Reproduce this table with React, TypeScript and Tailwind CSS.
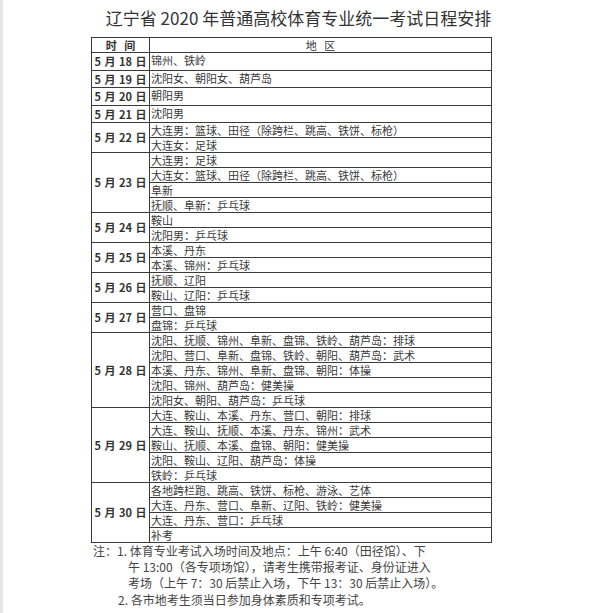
const font = { fontFamily: '"Noto Sans CJK SC", "Noto Sans", sans-serif' };

type Group = { date: string; items: string[] };

const groups: Group[] = [
  { date: '5 月 18 日', items: ['锦州、铁岭'] },
  { date: '5 月 19 日', items: ['沈阳女、朝阳女、葫芦岛'] },
  { date: '5 月 20 日', items: ['朝阳男'] },
  { date: '5 月 21 日', items: ['沈阳男'] },
  { date: '5 月 22 日', items: ['大连男：篮球、田径（除跨栏、跳高、铁饼、标枪）', '大连女：足球'] },
  {
    date: '5 月 23 日',
    items: ['大连男：足球', '大连女：篮球、田径（除跨栏、跳高、铁饼、标枪）', '阜新', '抚顺、阜新：乒乓球'],
  },
  { date: '5 月 24 日', items: ['鞍山', '沈阳男：乒乓球'] },
  { date: '5 月 25 日', items: ['本溪、丹东', '本溪、锦州：乒乓球'] },
  { date: '5 月 26 日', items: ['抚顺、辽阳', '鞍山、辽阳：乒乓球'] },
  { date: '5 月 27 日', items: ['营口、盘锦', '盘锦：乒乓球'] },
  {
    date: '5 月 28 日',
    items: [
      '沈阳、抚顺、锦州、阜新、盘锦、铁岭、葫芦岛：排球',
      '沈阳、营口、阜新、盘锦、铁岭、朝阳、葫芦岛：武术',
      '本溪、丹东、锦州、阜新、盘锦、朝阳：体操',
      '沈阳、锦州、葫芦岛：健美操',
      '沈阳女、朝阳、葫芦岛：乒乓球',
    ],
  },
  {
    date: '5 月 29 日',
    items: [
      '大连、鞍山、本溪、丹东、营口、朝阳：排球',
      '大连、鞍山、抚顺、本溪、丹东、锦州：武术',
      '鞍山、抚顺、本溪、盘锦、朝阳：健美操',
      '沈阳、鞍山、辽阳、葫芦岛：体操',
      '铁岭：乒乓球',
    ],
  },
  {
    date: '5 月 30 日',
    items: ['各地跨栏跑、跳高、铁饼、标枪、游泳、艺体', '大连、丹东、营口、阜新、辽阳、铁岭：健美操', '大连、丹东、营口：乒乓球', '补考'],
  },
];

function DateGroup({ group }: { group: Group }) {
  return (
    <div className="flex border-b border-[#3a3a3a]">
      <div className="w-[58px] shrink-0 flex items-center justify-center border-r border-[#3a3a3a] text-[11px] font-semibold text-[#333] whitespace-pre [word-spacing:1px]">
        {group.date}
      </div>
      <div className="flex-1 flex flex-col">
        {group.items.map((item, i) => (
          <div
            key={i}
            className={
              i < group.items.length - 1
                ? 'h-[15px] border-b border-[#3a3a3a] pl-[1px] text-[11px] leading-[14px] text-[#3a3a3a] whitespace-nowrap'
                : 'h-[14px] pl-[1px] text-[11px] leading-[14px] text-[#3a3a3a] whitespace-nowrap'
            }
          >
            {item}
          </div>
        ))}
      </div>
    </div>
  );
}

export default function App() {
  return (
    <div className="w-[596px] h-[613px] bg-white border-l-[3px] border-[#e6e6e6] overflow-hidden" style={font}>
      <div className="pt-[7px] h-[37px] text-center text-[17px] leading-[22px] text-[#333] pr-[2px]">
        辽宁省 2020 年普通高校体育专业统一考试日程安排
      </div>
      <div className="ml-[88px] w-[401px] border-t border-l border-r border-[#3a3a3a]">
        <div className="flex h-[15px] border-b border-[#3a3a3a] text-[11px] leading-[14px] text-[#333]">
          <div className="w-[58px] shrink-0 border-r border-[#3a3a3a] text-center font-semibold whitespace-pre">时   间</div>
          <div className="flex-1 text-center whitespace-pre">地   区</div>
        </div>
        {groups.map((g) => (
          <DateGroup key={g.date} group={g} />
        ))}
      </div>
      <div className="text-[12px] leading-[16px] text-[#444]">
        <div className="flex ml-[90px]">
          <span>注：</span>
          <span className="whitespace-pre">1. 体育专业考试入场时间及地点：上午 6:40（田径馆）、下</span>
        </div>
        <div className="ml-[125px] whitespace-pre">午 13:00（各专项场馆），请考生携带报考证、身份证进入</div>
        <div className="ml-[125px] whitespace-pre">考场（上午 7：30 后禁止入场，下午 13：30 后禁止入场）。</div>
        <div className="ml-[115px] mt-[1px] whitespace-pre">2. 各市地考生须当日参加身体素质和专项考试。</div>
      </div>
    </div>
  );
}
